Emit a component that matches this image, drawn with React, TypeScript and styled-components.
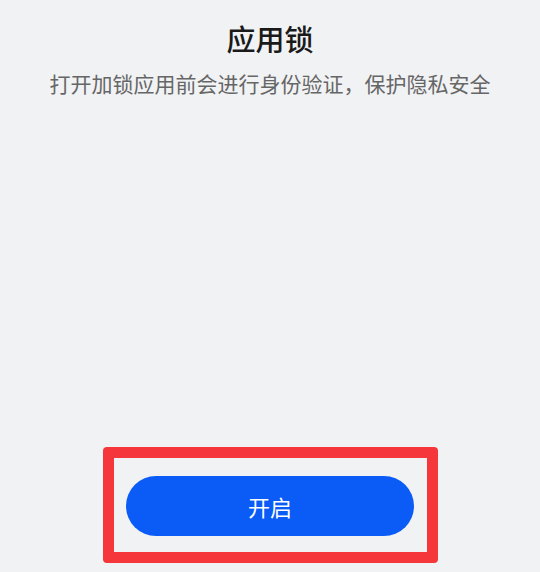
import React from 'react';
import styled, { createGlobalStyle } from 'styled-components';

const GlobalStyle = createGlobalStyle`
  html, body {
    margin: 0;
    padding: 0;
    background: #f1f2f4;
  }
  #root {
    min-height: 100vh;
  }
`;

const Page = styled.div`
  min-height: 100vh;
  display: flex;
  flex-direction: column;
  align-items: center;
  box-sizing: border-box;
  padding: 18px 0 9px;
  font-family: "Noto Sans CJK SC", "Noto Sans", sans-serif;
`;

const Header = styled.div`
  display: flex;
  flex-direction: column;
  align-items: center;
`;

const Title = styled.h1`
  margin: 0;
  font-size: 29px;
  line-height: 40px;
  font-weight: 500;
  color: #1a1a1a;
`;

const Subtitle = styled.p`
  margin: 10px 0 0;
  font-size: 21px;
  line-height: 30px;
  color: #666666;
`;

const Spacer = styled.div`
  flex: 1;
`;

const Highlight = styled.div`
  box-sizing: border-box;
  width: 335px;
  height: 116px;
  border: 11px solid #f5363a;
  border-radius: 4px;
  display: flex;
  align-items: center;
  justify-content: center;
  padding-top: 2px;
`;

const PrimaryButton = styled.button`
  width: 288px;
  height: 60px;
  border: none;
  border-radius: 30px;
  background: #0b5cf6;
  color: #ffffff;
  font-family: inherit;
  font-size: 22px;
  font-weight: 400;
  cursor: pointer;
`;

const App: React.FC = () => {
  return (
    <>
      <GlobalStyle />
      <Page>
        <Header>
          <Title>应用锁</Title>
          <Subtitle>打开加锁应用前会进行身份验证，保护隐私安全</Subtitle>
        </Header>
        <Spacer />
        <Highlight>
          <PrimaryButton>开启</PrimaryButton>
        </Highlight>
      </Page>
    </>
  );
};

export default App;
